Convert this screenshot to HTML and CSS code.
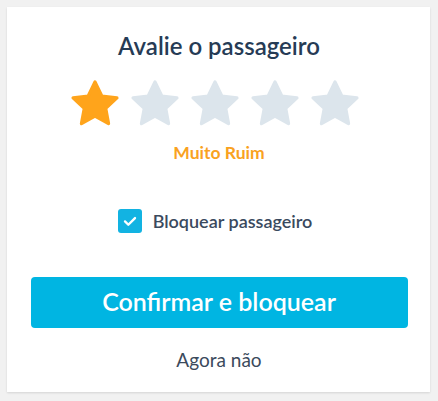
FILE: index.html
```html
<!DOCTYPE html>
<html lang="pt">
<head>
<meta charset="utf-8">
<link rel="stylesheet" href="styles.css">
</head>
<body>
<div class="card">
  <h1 class="title">Avalie o passageiro</h1>
  <div class="stars">
    <svg class="star on" viewBox="0 0 24 24"><path d="M12 2.6l2.9 6 6.5.8-4.8 4.5 1.2 6.5L12 17.2l-5.8 3.2 1.2-6.5L2.6 9.4l6.5-.8z"/></svg>
    <svg class="star" viewBox="0 0 24 24"><path d="M12 2.6l2.9 6 6.5.8-4.8 4.5 1.2 6.5L12 17.2l-5.8 3.2 1.2-6.5L2.6 9.4l6.5-.8z"/></svg>
    <svg class="star" viewBox="0 0 24 24"><path d="M12 2.6l2.9 6 6.5.8-4.8 4.5 1.2 6.5L12 17.2l-5.8 3.2 1.2-6.5L2.6 9.4l6.5-.8z"/></svg>
    <svg class="star" viewBox="0 0 24 24"><path d="M12 2.6l2.9 6 6.5.8-4.8 4.5 1.2 6.5L12 17.2l-5.8 3.2 1.2-6.5L2.6 9.4l6.5-.8z"/></svg>
    <svg class="star" viewBox="0 0 24 24"><path d="M12 2.6l2.9 6 6.5.8-4.8 4.5 1.2 6.5L12 17.2l-5.8 3.2 1.2-6.5L2.6 9.4l6.5-.8z"/></svg>
  </div>
  <div class="rating">Muito Ruim</div>
  <label class="check">
    <span class="box"><svg viewBox="0 0 24 24"><path d="M6 12.5l4 4 8-8"/></svg></span>
    <span class="check-label">Bloquear passageiro</span>
  </label>
  <button class="primary">Confirmar e bloquear</button>
  <button class="link">Agora não</button>
</div>
</body>
</html>
```
FILE: styles.css
```css
* { box-sizing: border-box; }
html, body { margin: 0; padding: 0; }
body {
  background: #f1f1f1;
  font-family: Lato, "Open Sans", sans-serif;
  padding: 7px;
  width: 438px;
  height: 401px;
}
.card {
  background: #fff;
  width: 423px;
  height: 385px;
  box-shadow: 0 1px 2px rgba(0,0,0,0.12);
  display: flex;
  flex-direction: column;
  align-items: center;
  padding: 23px 23px 0 24px;
}
.title {
  margin: 0;
  font-size: 24px;
  font-weight: 600;
  color: #263b55;
  line-height: 32px;
}
.stars {
  display: flex;
  gap: 4px;
  margin-top: 14px;
  margin-right: 9px;
}
.star {
  width: 56px;
  height: 56px;
  fill: #dce5ec;
  stroke: #dce5ec;
  stroke-width: 1.4;
  stroke-linejoin: round;
}
.star.on { fill: #ffa41b; stroke: #ffa41b; }
.rating {
  margin-top: 11px;
  font-size: 17.5px;
  font-weight: 700;
  color: #f9a21f;
  line-height: 20px;
}
.check {
  margin-top: 46px;
  display: flex;
  align-items: center;
  gap: 11px;
  margin-right: 8px;
  height: 24px;
}
.box {
  width: 24px;
  height: 24px;
  border-radius: 3px;
  background: #12b3e2;
  display: flex;
  align-items: center;
  justify-content: center;
}
.box svg {
  width: 20px;
  height: 20px;
  fill: none;
  stroke: #fff;
  stroke-width: 2.8;
  stroke-linecap: round;
  stroke-linejoin: round;
}
.check-label {
  font-size: 18px;
  font-weight: 600;
  color: #3a4a5e;
  line-height: 24px;
}
.primary {
  margin-top: 44px;
  width: 377px;
  height: 51px;
  border: none;
  border-radius: 4px;
  background: #00b5e2;
  color: #fff;
  font-family: inherit;
  font-size: 25px;
  font-weight: 600;
  padding: 0 0 3px;
}
.link {
  margin-top: 20px;
  border: none;
  background: none;
  padding: 0;
  font-family: inherit;
  font-size: 19px;
  color: #3b4a5c;
  line-height: 24px;
}
```
